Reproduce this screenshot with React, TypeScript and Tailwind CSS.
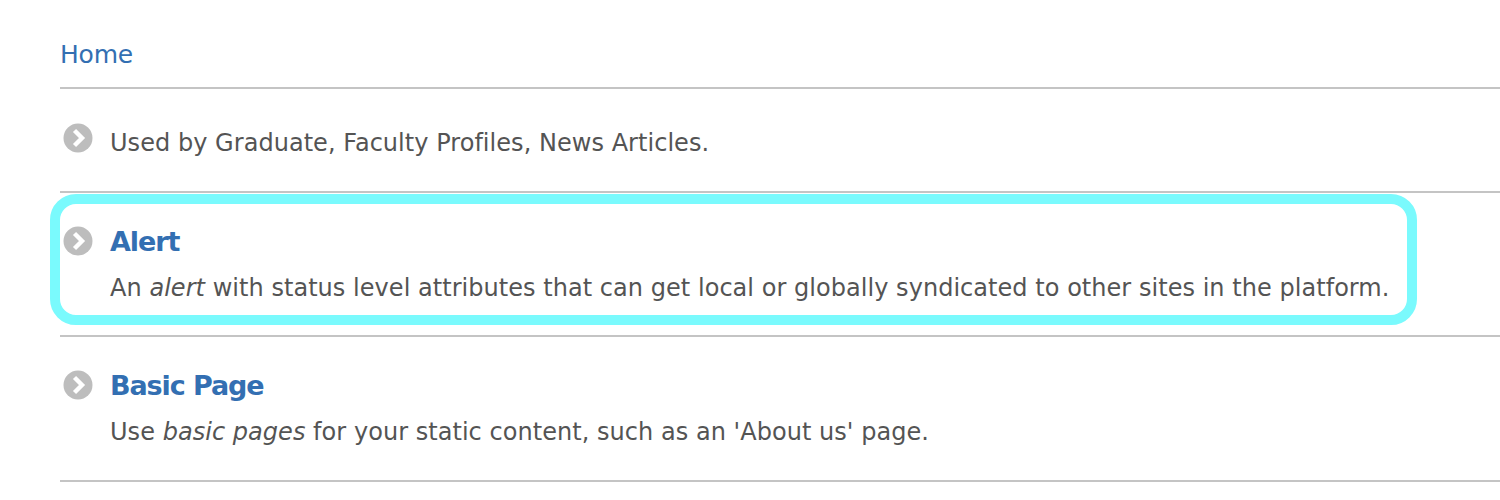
import React from 'react';

const font = { fontFamily: '"DejaVu Sans", sans-serif' };

const Bullet = () => (
  <svg width="30" height="30" viewBox="0 0 30 30" className="shrink-0">
    <circle cx="15" cy="15" r="14.5" fill="#bdbdbd" />
    <path d="M11.5 7.5 19 15l-7.5 7.5" fill="none" stroke="#fff" strokeWidth="4.4" />
  </svg>
);

const Item = ({ title, height, children }: { title: string; height: string; children: React.ReactNode }) => (
  <li className={`flex ${height} border-b-2 border-[#c4c4c4] pl-[3px] pt-[33px]`}>
    <Bullet />
    <div className="ml-[17px] -mt-[2px]">
      <a className="block text-[27px] leading-[36px] font-bold tracking-[-1.1px] text-[#336fb2] mb-[10px]">{title}</a>
      <p className="text-[24px] leading-[36px] tracking-[0.04px] text-[#545454] whitespace-nowrap">{children}</p>
    </div>
  </li>
);

export default function App() {
  return (
    <div className="w-[1500px] h-[500px] overflow-hidden bg-white pl-[60px]" style={font}>
      <div className="h-[89px] border-b-2 border-[#c4c4c4] pt-[18px] text-[25px] leading-[36px] tracking-[-0.2px] text-[#336fb2]">
        <div className="mt-[19px]">Home</div>
      </div>
      <ul className="relative">
        <li className="flex h-[104px] border-b-2 border-[#c4c4c4] pl-[3px] pt-[34px]">
          <Bullet />
          <p className="ml-[17px] mt-[2px] text-[24px] leading-[36px] tracking-[0.04px] text-[#545454]">
            Used by Graduate, Faculty Profiles, News Articles.
          </p>
        </li>
        <Item title="Alert" height="h-[144px]">
          An <em>alert</em> with status level attributes that can get local or globally syndicated to other sites in the platform.
        </Item>
        <Item title="Basic Page" height="h-[145px]">
          Use <em>basic pages</em> for your static content, such as an 'About us' page.
        </Item>
        <div className="absolute left-[-10px] top-[105px] w-[1367px] h-[131px] rounded-[26px] border-[10px] border-[#7afafd]" />
      </ul>
    </div>
  );
}
